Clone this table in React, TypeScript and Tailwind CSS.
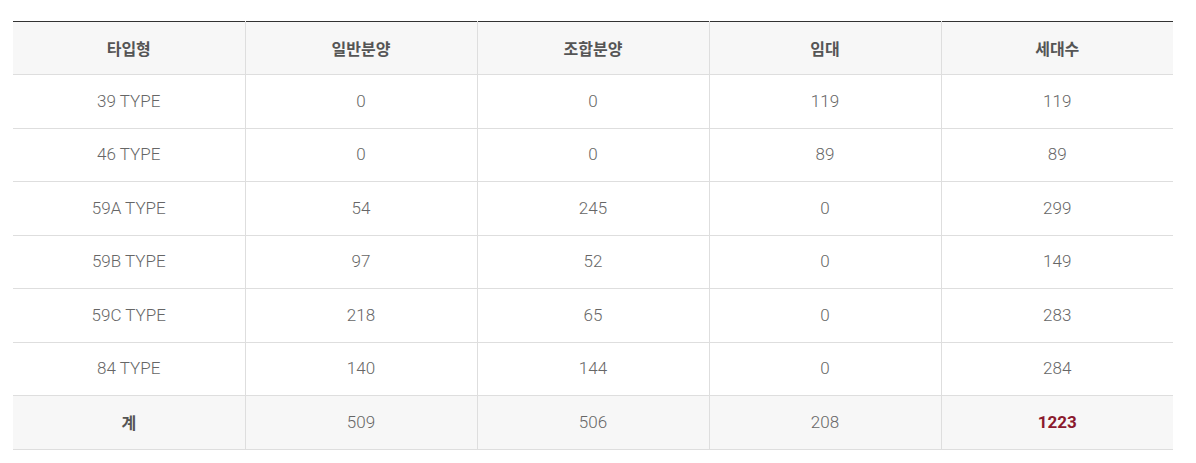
import React from 'react';

const HEAD = ['타입형', '일반분양', '조합분양', '임대', '세대수'];

const ROWS: (string | number)[][] = [
  ['39 TYPE', 0, 0, 119, 119],
  ['46 TYPE', 0, 0, 89, 89],
  ['59A TYPE', 54, 245, 0, 299],
  ['59B TYPE', 97, 52, 0, 149],
  ['59C TYPE', 218, 65, 0, 283],
  ['84 TYPE', 140, 144, 0, 284],
];

const TOTAL = ['계', 509, 506, 208, 1223];

const KR = { fontFamily: '"Noto Sans CJK KR", sans-serif', fontSize: 16 };

export default function App() {
  return (
    <div
      className="w-[1196px] h-[463px] bg-white px-[13px] pt-[21px]"
      style={{ fontFamily: 'Roboto, "Noto Sans CJK KR", sans-serif' }}
    >
      <table className="w-[1160px] table-fixed border-collapse border-t border-t-[#333] text-[17px]">
        <thead>
          <tr className="bg-[#f7f7f7] h-[53px]">
            {HEAD.map((h, i) => (
              <th
                key={h}
                className={`font-bold text-[#555] border-b border-[#dedede] ${i > 0 ? 'border-l' : ''}`}
                style={KR}
              >
                {h}
              </th>
            ))}
          </tr>
        </thead>
        <tbody>
          {ROWS.map((r) => (
            <tr key={r[0]} className="h-[53.5px]">
              {r.map((c, i) => (
                <td
                  key={i}
                  className={`text-center font-light text-[#666] border-b border-[#dedede] ${i > 0 ? 'border-l' : ''}`}
                >
                  {c}
                </td>
              ))}
            </tr>
          ))}
          <tr className="h-[53.5px] bg-[#f7f7f7]">
            {TOTAL.map((c, i) => (
              <td
                key={i}
                className={`text-center border-b border-[#dedede] ${i > 0 ? 'border-l' : ''} ${
                  i === 0
                    ? 'font-bold text-[#555]'
                    : i === 4
                    ? 'font-bold text-[#8b1a2e]'
                    : 'font-light text-[#666]'
                }`}
                style={i === 0 ? KR : undefined}
              >
                {c}
              </td>
            ))}
          </tr>
        </tbody>
      </table>
    </div>
  );
}
